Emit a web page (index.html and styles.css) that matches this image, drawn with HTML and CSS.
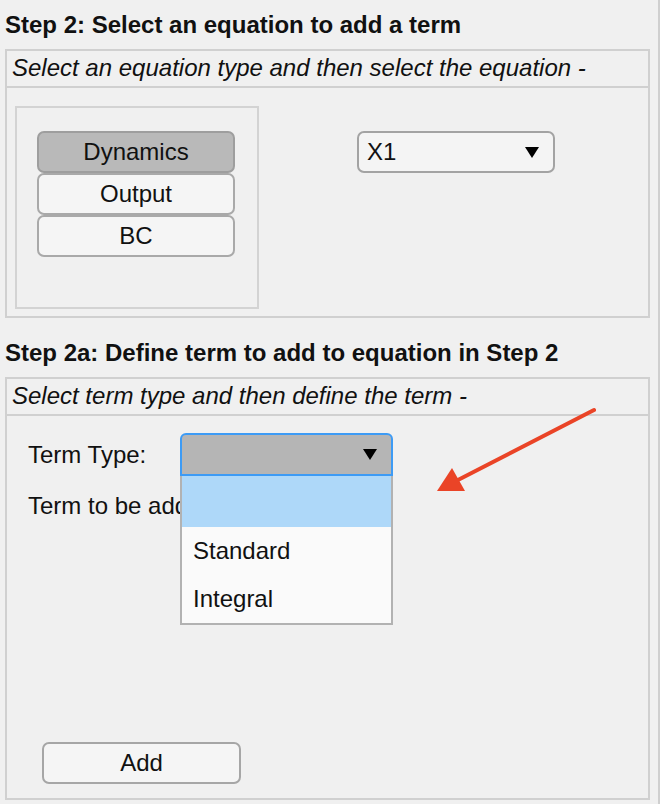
FILE: index.html
```html
<!DOCTYPE html>
<html lang="en">

<head>
    <meta charset="UTF-8">
    <title>Add Term</title>
    <link rel="stylesheet" href="styles.css">
</head>

<body>
    <div class="app">
        <div class="step">
            <div class="step-title">Step 2: Select an equation to add a term</div>
            <div class="panel">
                <div class="panel-head">Select an equation type and then select the equation -</div>
                <div class="panel-body eq-body">
                    <div class="btn-group">
                        <div class="toggle active">Dynamics</div>
                        <div class="toggle">Output</div>
                        <div class="toggle">BC</div>
                    </div>
                    <div class="select eq-select">
                        <span>X1</span>
                        <i class="caret"></i>
                    </div>
                </div>
            </div>
        </div>

        <div class="step step-2a">
            <div class="step-title">Step 2a: Define term to add to equation in Step 2</div>
            <div class="panel">
                <div class="panel-head">Select term type and then define the term -</div>
                <div class="panel-body term-body">
                    <div class="row">
                        <label class="label">Term Type:</label>
                        <div class="dropdown">
                            <div class="select term-select open">
                                <span></span>
                                <i class="caret"></i>
                            </div>
                            <ul class="menu">
                                <li class="hover"></li>
                                <li>Standard</li>
                                <li>Integral</li>
                            </ul>
                        </div>
                    </div>
                    <div class="label term-label">Term to be added:</div>
                    <div class="add-btn">Add</div>
                </div>
            </div>
        </div>

        <!-- 标注箭头 -->
        <svg class="pointer" width="200" height="110" viewBox="430 400 200 110">
            <line x1="594" y1="410" x2="456" y2="481" stroke="#ea4427" stroke-width="4" stroke-linecap="round"/>
            <polygon points="437,491 452,468 465,491" fill="#ea4427"/>
        </svg>
    </div>
</body>

</html>
```

FILE: styles.css
```css
* {
    box-sizing: border-box;
}

body {
    margin: 0;
    background: #f0f0f0;
    font-family: "Liberation Sans", Arial, sans-serif;
    font-size: 24px;
    color: #111;
}

.app {
    position: relative;
    width: 660px;
    height: 804px;
    padding-left: 5px;
    border-right: 2px solid #cfcfcf;
}

.step-title {
    font-weight: bold;
    line-height: 28px;
    padding: 11px 0 10px;
}

.step-2a {
    margin-top: 10px;
}

.panel {
    width: 645px;
    border: 2px solid #d0d0d0;
}

.panel-head {
    font-style: italic;
    line-height: 28px;
    padding: 3px 5px 4px;
    border-bottom: 2px solid #d0d0d0;
}

.eq-body {
    display: flex;
    align-items: flex-start;
    height: 228px;
    padding: 18px 0 0 8px;
}

.btn-group {
    width: 244px;
    height: 203px;
    border: 2px solid #d3d3d3;
    padding: 23px 0 0 20px;
}

.toggle {
    width: 198px;
    height: 42px;
    line-height: 38px;
    text-align: center;
    background: #f5f5f5;
    border: 2px solid #a9a9a9;
    border-radius: 7px;
}
.toggle.active {
    background: #b9b9b9;
    border-color: #9e9e9e;
}

.select {
    position: relative;
    height: 42px;
    line-height: 38px;
    padding-left: 8px;
    background: #f4f4f4;
    border: 2px solid #a3a3a3;
    border-radius: 7px;
}

.caret {
    position: absolute;
    right: 14px;
    top: 14px;
    width: 0;
    height: 0;
    border-left: 7.5px solid transparent;
    border-right: 7.5px solid transparent;
    border-top: 11px solid #000;
}

.eq-select {
    width: 198px;
    margin: 25px 0 0 98px;
}

.term-body {
    display: flex;
    flex-direction: column;
    height: 382px;
    padding: 17px 0 14px 21px;
}

.row {
    display: flex;
    align-items: center;
}

.label {
    line-height: 28px;
}

.row .label {
    width: 152px;
}

.dropdown {
    position: relative;
}

.term-select {
    width: 213px;
    height: 43px;
    background: #b5b5b5;
    border-color: #3d9bf5;
    border-radius: 6px 6px 0 0;
}

.menu {
    position: absolute;
    left: 0;
    top: 43px;
    z-index: 2;
    width: 213px;
    margin: 0;
    padding: 0;
    list-style: none;
    background: #fafafa;
    border: 2px solid #b2b2b2;
    border-top: 0;
}
.menu li {
    height: 48px;
    line-height: 48px;
    padding-left: 11px;
}
.menu li.hover {
    height: 51px;
    background: #aed8f9;
}

.term-label {
    margin-top: 16px;
    white-space: nowrap;
}

.add-btn {
    width: 199px;
    height: 42px;
    line-height: 38px;
    margin: auto 0 0 14px;
    text-align: center;
    background: #f5f5f5;
    border: 2px solid #a6a6a6;
    border-radius: 7px;
}

.pointer {
    position: absolute;
    left: 430px;
    top: 400px;
    z-index: 3;
}
```
